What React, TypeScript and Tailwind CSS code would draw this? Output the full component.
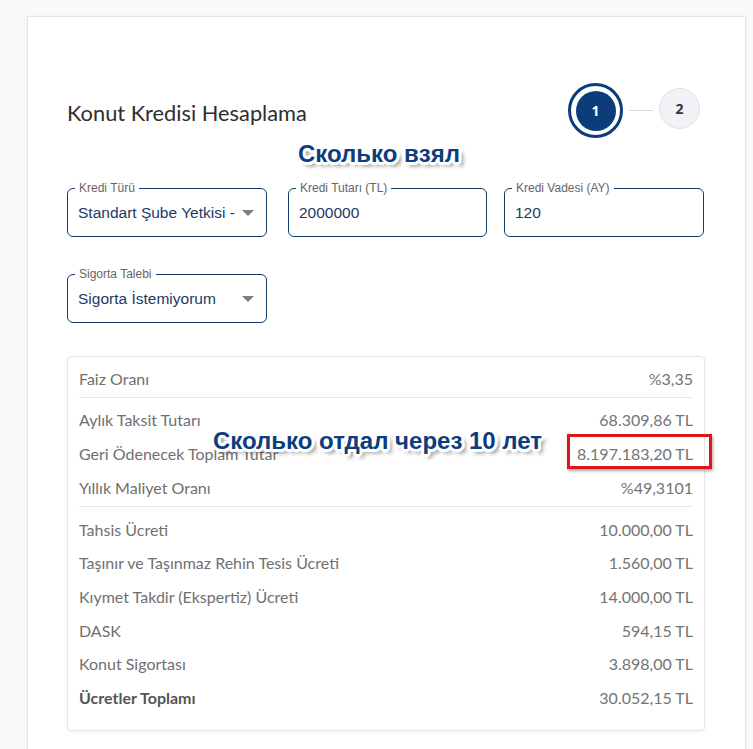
const outline =
  "[text-shadow:2px_0_0_#fff,-2px_0_0_#fff,0_2px_0_#fff,0_-2px_0_#fff,2px_2px_0_#fff,-2px_-2px_0_#fff,2px_-2px_0_#fff,-2px_2px_0_#fff,3px_1px_0_#fff,1px_3px_0_#fff,-3px_1px_0_#fff,3px_-1px_0_#fff,-1px_3px_0_#fff,1px_-3px_0_#fff,4px_4px_4px_rgba(0,0,0,0.55)]";

function Field({
  label,
  value,
  select,
  className,
}: {
  label: string;
  value: string;
  select?: boolean;
  className?: string;
}) {
  return (
    <div
      className={`relative h-[49px] rounded-[6px] border border-[#123b68] flex items-center pl-[10px] pr-[12px] ${className ?? ""}`}
    >
      <span className="absolute -top-[9px] left-[7px] bg-white px-[4px] text-[12px] leading-[16px] text-[#666] font-['Liberation_Sans',Arial,sans-serif]">
        {label}
      </span>
      <span className="flex-1 overflow-hidden whitespace-nowrap text-[15.5px] text-[#1b3a66] font-['Liberation_Sans',Arial,sans-serif]">
        {value}
      </span>
      {select && (
        <span className="ml-[4px] h-0 w-0 border-x-[6px] border-t-[6px] border-x-transparent border-t-[#7d7d7d]" />
      )}
    </div>
  );
}

function Row({
  label,
  value,
  bold,
  tight,
}: {
  label: string;
  value: string;
  bold?: boolean;
  tight?: boolean;
}) {
  return (
    <div
      className={`flex items-center justify-between ${tight ? "h-[33.6px]" : "h-[34px]"} text-[16px] ${bold ? "font-bold text-[#555]" : "text-[#707070]"}`}
    >
      <span>{label}</span>
      <span className="text-[#747474] font-normal">{value}</span>
    </div>
  );
}

export default function App() {
  return (
    <div className="relative h-[749px] overflow-hidden bg-[#f9f9f9] pt-[16px] pl-[27px]">
      <div className="w-[719px] h-[760px] bg-white border border-[#e4e4e4] shadow-[0_0_3px_rgba(0,0,0,0.06)] pl-[39px] pr-[40px] pt-[66px]">
        <header className="flex items-center justify-between h-[55px]">
          <h1 className="pt-[5px] text-[21.8px] text-[#2e2e2e] font-['Lato',sans-serif]">
            Konut Kredisi Hesaplama
          </h1>
          <div className="flex items-center mr-[5px]">
            <div className="flex h-[55px] w-[55px] items-center justify-center rounded-full border-[3px] border-[#0b3d7a]">
              <div className="flex h-[40px] w-[40px] items-center justify-center rounded-full bg-[#0b3d7a] text-[14px] font-bold text-white font-['Open_Sans',sans-serif]">
                1
              </div>
            </div>
            <div className="mx-[6px] h-px w-[24px] bg-[#d8d8d8]" />
            <div className="flex h-[41px] w-[41px] items-center justify-center rounded-full border border-[#e2e2e2] bg-[#f1f2f5] text-[14px] font-bold text-[#333] font-['Open_Sans',sans-serif] -mt-[5px]">
              2
            </div>
          </div>
        </header>

        <div className="mt-[50px] flex">
          <Field className="w-[200px]" label="Kredi Türü" value="Standart Şube Yetkisi - Konut" select />
          <Field className="ml-[21px] w-[199px]" label="Kredi Tutarı (TL)" value="2000000" />
          <Field className="ml-[17px] w-[200px]" label="Kredi Vadesi (AY)" value="120" />
        </div>

        <div className="mt-[37px]">
          <Field className="w-[200px]" label="Sigorta Talebi" value="Sigorta İstemiyorum" select />
        </div>

        <section className="mt-[33px] rounded-[4px] border border-[#e6e6e6] shadow-[0_1px_3px_rgba(0,0,0,0.06)] px-[11px] font-['Lato',sans-serif]">
          <div className="pt-[5px] pb-[1px] border-b border-[#e8e8e8]">
            <Row label="Faiz Oranı" value="%3,35" />
          </div>
          <div className="pt-[5px] pb-[1px] border-b border-[#e8e8e8]">
            <Row label="Aylık Taksit Tutarı" value="68.309,86 TL" />
            <Row label="Geri Ödenecek Toplam Tutar" value="8.197.183,20 TL" />
            <Row label="Yıllık Maliyet Oranı" value="%49,3101" />
          </div>
          <div className="pt-[6px] pb-[15px]">
            <Row tight label="Tahsis Ücreti" value="10.000,00 TL" />
            <Row tight label="Taşınır ve Taşınmaz Rehin Tesis Ücreti" value="1.560,00 TL" />
            <Row tight label="Kıymet Takdir (Ekspertiz) Ücreti" value="14.000,00 TL" />
            <Row tight label="DASK" value="594,15 TL" />
            <Row tight label="Konut Sigortası" value="3.898,00 TL" />
            <Row tight bold label="Ücretler Toplamı" value="30.052,15 TL" />
          </div>
        </section>
      </div>

      <div
        className={`absolute left-[298px] top-[142px] text-[24px] leading-[24px] font-bold text-[#0c3d7c] font-['Liberation_Sans',Arial,sans-serif] ${outline}`}
      >
        Сколько взял
      </div>
      <div className="absolute left-[567px] top-[434px] h-[35px] w-[145px] border-[3px] border-[#e0141b] shadow-[1px_2px_3px_rgba(0,0,0,0.35)]" />
      <div
        className={`absolute left-[213px] top-[429px] text-[24px] leading-[24px] font-bold text-[#0c3d7c] font-['Liberation_Sans',Arial,sans-serif] ${outline}`}
      >
        Сколько отдал через 10 лет
      </div>
    </div>
  );
}
